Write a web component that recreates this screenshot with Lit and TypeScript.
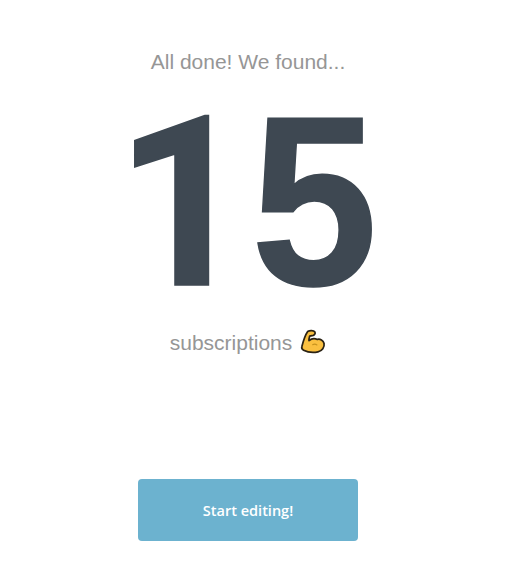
import { LitElement, html, css } from "lit";
import { customElement } from "lit/decorators.js";

@customElement("app-root")
export class AppRoot extends LitElement {
  static styles = css`
    :host { display: block; width: 496px; height: 573px; background: #fff; overflow: hidden; }
    .page {
      display: flex; flex-direction: column; align-items: center;
      padding-top: 49px;
      font-family: "Liberation Sans", Arial, sans-serif;
    }
    .lead, .sub { font-size: 21px; line-height: 25px; color: #969696; }
    .count {
      font-size: 242px; font-weight: 700; line-height: 240px; color: #3e4852;
      margin-top: 7px; display: flex; align-items: baseline;
      -webkit-text-stroke: 1.5px #3e4852;
    }
    .one {
      font-family: Roboto, sans-serif; font-size: 238px; width: 135px;
      box-sizing: border-box; padding-left: 3px; text-align: left; margin-left: -2px;
    }
    .five { display: inline-block; transform: scaleX(0.94); transform-origin: 50% 50%; }
    .sub { margin-top: 4px; display: flex; align-items: center; gap: 6px; }
    .sub svg { width: 28px; height: 28px; display: block; }
    .btn {
      margin-top: 123px; width: 220px; height: 62px; border: 0; border-radius: 4px;
      background: #6cb2cf; color: #fff;
      font-family: "Open Sans", sans-serif; font-size: 14.5px; font-weight: 600;
      display: flex; align-items: center; justify-content: center; padding: 0;
    }
  `;

  render() {
    return html`
      <div class="page">
        <div class="lead">All done! We found...</div>
        <div class="count"><span class="one">1</span><span class="five">5</span></div>
        <div class="sub">
          <span>subscriptions</span>
          <svg viewBox="0 0 26 26" aria-hidden="true">
            <path d="M9 3.2 C11 2 14.5 2.2 15.6 3.6 C16.4 4.8 15.6 6.4 14.2 6.8 L10.8 7.6 C10.4 9 10 10.5 10.2 11.8 C12.4 9.8 15.6 9.4 18 10.6 C20.4 9.8 23.6 11.4 24.2 14.4 C24.8 18 22.4 21.4 18.6 22.2 C13.6 23.2 8.6 22.4 5.2 20.6 C3.6 19.8 3.2 18.6 3.6 17.2 C4.6 13.2 6.2 7.2 9 3.2 Z"
              fill="#fac040" stroke="#2a2214" stroke-width="1.6" stroke-linejoin="round"/>
            <path d="M13.6 15.6 C14.8 14.8 16.4 14.8 17.6 15.8" fill="none" stroke="#c8941f" stroke-width="1" stroke-linecap="round"/>
          </svg>
        </div>
        <div class="btn">Start editing!</div>
      </div>
    `;
  }
}
